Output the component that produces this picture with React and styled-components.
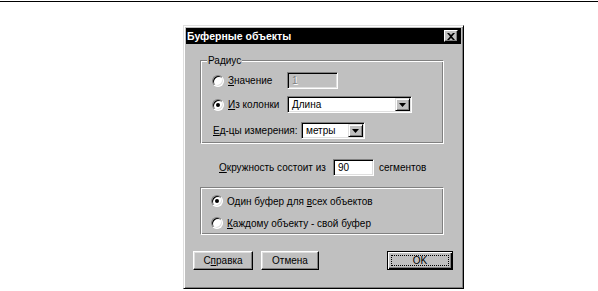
import React from "react";
import styled, { createGlobalStyle } from "styled-components";

const GlobalStyle = createGlobalStyle`
  html, body { margin: 0; padding: 0; background: #fff; }
  body {
    font-family: "Liberation Sans", Arial, sans-serif;
    font-size: 10px;
    color: #000;
  }
`;

const Page = styled.div`
  width: 598px;
  height: 291px;
  overflow: hidden;
  display: flex;
  flex-direction: column;
`;

const TopRule = styled.div`
  margin-top: 1px;
  height: 1px;
  background: #000;
`;

const Window = styled.div`
  margin: 23px 0 0 183px;
  width: 281px;
  height: 264px;
  box-sizing: border-box;
  background: #c0c0c0;
  border: 1px solid;
  border-color: #dfdfdf #000 #000 #dfdfdf;
  box-shadow: inset 1px 1px 0 #fff, inset -1px -1px 0 #808080;
  padding: 2px;
  display: flex;
  flex-direction: column;
`;

const TitleBar = styled.div`
  height: 16px;
  flex: none;
  background: #000;
  color: #fff;
  font-weight: bold;
  font-size: 10.5px;
  display: flex;
  align-items: center;
  justify-content: space-between;
  padding: 0 3px 0 1px;
`;

const CloseButton = styled.div`
  width: 14px;
  height: 12px;
  box-sizing: border-box;
  background: #c0c0c0;
  border: 1px solid;
  border-color: #fff #000 #000 #fff;
  box-shadow: inset -1px -1px 0 #808080;
  display: flex;
  align-items: center;
  justify-content: center;
`;

const Body = styled.div`
  display: flex;
  flex-direction: column;
  padding: 10px 8px 0 7px;
`;

const Group = styled.fieldset`
  margin: ${(p) => p.$mt || 0}px 0 0 7px;
  width: 244px;
  box-sizing: border-box;
  padding: ${(p) => p.$pad};
  min-inline-size: 0;
  border: 1px solid;
  border-color: #808080 #fff #fff #808080;
  box-shadow: inset 1px 1px 0 #fff, inset -1px -1px 0 #808080;
  display: flex;
  flex-direction: column;
  gap: ${(p) => p.$gap};
`;

const Legend = styled.legend`
  margin-left: 6px;
  padding: 0 1px;
  line-height: 13px;
  background: #c0c0c0;
`;

const Row = styled.div`
  display: flex;
  align-items: center;
  height: ${(p) => p.$h || 17}px;
  margin-left: ${(p) => p.$indent || 0}px;
  margin-top: ${(p) => p.$mt || 0}px;
`;

const RadioLabel = styled.label`
  display: flex;
  align-items: center;
  gap: 4px;
  width: ${(p) => (p.$w ? `${p.$w}px` : "auto")};
  flex: none;
`;

const RadioMark = styled.span`
  width: 12px;
  height: 12px;
  box-sizing: border-box;
  border-radius: 50%;
  background: #fff;
  border: 1px solid;
  border-color: #808080 #fff #fff #808080;
  box-shadow: inset 1px 1px 0 #000, inset -1px -1px 0 #dfdfdf;
  display: flex;
  align-items: center;
  justify-content: center;
  flex: none;
  &::after {
    content: "";
    width: 4px;
    height: 4px;
    border-radius: 50%;
    background: ${(p) => (p.$checked ? "#000" : "transparent")};
  }
`;

const Text = styled.span`
  width: ${(p) => (p.$w ? `${p.$w}px` : "auto")};
  flex: none;
  white-space: nowrap;
`;

const U = styled.span`
  text-decoration: underline;
`;

const Field = styled.div`
  width: ${(p) => p.$w}px;
  height: 17px;
  box-sizing: border-box;
  flex: none;
  border: 1px solid;
  border-color: #808080 #fff #fff #808080;
  box-shadow: inset 1px 1px 0 #000, inset -1px -1px 0 #dfdfdf;
  background: ${(p) => (p.$disabled ? "#c0c0c0" : "#fff")};
  color: ${(p) => (p.$disabled ? "#808080" : "#000")};
  text-shadow: ${(p) => (p.$disabled ? "1px 1px 0 #fff" : "none")};
  display: flex;
  align-items: center;
  justify-content: space-between;
  padding: 0 1px 0 4px;
`;

const DropButton = styled.div`
  width: 15px;
  height: 13px;
  box-sizing: border-box;
  background: #c0c0c0;
  border: 1px solid;
  border-color: #dfdfdf #000 #000 #dfdfdf;
  box-shadow: inset 1px 1px 0 #fff, inset -1px -1px 0 #808080;
  display: flex;
  align-items: center;
  justify-content: center;
`;

const Gap = styled.span`
  width: ${(p) => p.$w}px;
  flex: none;
`;

const ButtonRow = styled.div`
  display: flex;
  align-items: center;
  justify-content: space-between;
  margin-top: 16px;
`;

const ButtonGroup = styled.div`
  display: flex;
  gap: 8px;
`;

const Button = styled.div`
  width: ${(p) => p.$w}px;
  height: 19px;
  box-sizing: border-box;
  background: #c0c0c0;
  border: 1px solid;
  border-color: ${(p) => (p.$default ? "#000" : "#fff #000 #000 #fff")};
  box-shadow: ${(p) =>
    p.$default
      ? "inset 1px 1px 0 #fff, inset -1px -1px 0 #000, inset -2px -2px 0 #808080"
      : "inset -1px -1px 0 #808080, inset 1px 1px 0 #dfdfdf"};
  display: flex;
  align-items: center;
  justify-content: center;
  padding: 3px;
`;

const Focus = styled.span`
  flex: 1;
  align-self: stretch;
  border: 1px dotted #000;
  display: flex;
  align-items: center;
  justify-content: center;
`;

const CloseIcon = () => (
  <svg width="8" height="7" viewBox="0 0 8 7">
    <path d="M0 0h2l2 2 2-2h2L5 3.5 8 7H6L4 5 2 7H0l3-3.5z" fill="#000" />
  </svg>
);

const Arrow = () => (
  <svg width="7" height="4" viewBox="0 0 7 4">
    <path d="M0 0h7L3.5 4z" fill="#000" />
  </svg>
);

export default function App() {
  return (
    <>
      <GlobalStyle />
      <Page>
        <TopRule />
        <Window>
          <TitleBar>
            <span>Буферные объекты</span>
            <CloseButton>
              <CloseIcon />
            </CloseButton>
          </TitleBar>
          <Body>
            <Group $pad="5px 0 4px 0" $gap="0px">
              <Legend>Радиус</Legend>
              <Row $indent={11}>
                <RadioLabel $w={75}>
                  <RadioMark />
                  <span>
                    <U>З</U>начение
                  </span>
                </RadioLabel>
                <Field $w={51} $disabled>
                  1
                </Field>
              </Row>
              <Row $indent={11} $mt={7}>
                <RadioLabel $w={75}>
                  <RadioMark $checked />
                  <span>
                    <U>И</U>з колонки
                  </span>
                </RadioLabel>
                <Field $w={125}>
                  <span>Длина</span>
                  <DropButton>
                    <Arrow />
                  </DropButton>
                </Field>
              </Row>
              <Row $indent={12} $mt={9}>
                <Text $w={88}>
                  <U>Е</U>д-цы измерения:
                </Text>
                <Field $w={64}>
                  <span>метры</span>
                  <DropButton>
                    <Arrow />
                  </DropButton>
                </Field>
              </Row>
            </Group>
            <Row $indent={26} $mt={15}>
              <Text>
                <U>О</U>кружность состоит из
              </Text>
              <Gap $w={7} />
              <Field $w={41}>90</Field>
              <Gap $w={5} />
              <Text>сегментов</Text>
            </Row>
            <Group $pad="6px 0 4px 0" $gap="8px" $mt={11}>
              <Row $indent={10} $h={14}>
                <RadioLabel>
                  <RadioMark $checked />
                  <span>
                    Один буфер для <U>в</U>сех объектов
                  </span>
                </RadioLabel>
              </Row>
              <Row $indent={10} $h={14}>
                <RadioLabel>
                  <RadioMark />
                  <span>
                    <U>К</U>аждому объекту - свой буфер
                  </span>
                </RadioLabel>
              </Row>
            </Group>
            <ButtonRow>
              <ButtonGroup>
                <Button $w={60}>
                  <span>
                    С<U>п</U>равка
                  </span>
                </Button>
                <Button $w={58}>
                  <span>Отмена</span>
                </Button>
              </ButtonGroup>
              <Button $w={66} $default>
                <Focus>OK</Focus>
              </Button>
            </ButtonRow>
          </Body>
        </Window>
      </Page>
    </>
  );
}
